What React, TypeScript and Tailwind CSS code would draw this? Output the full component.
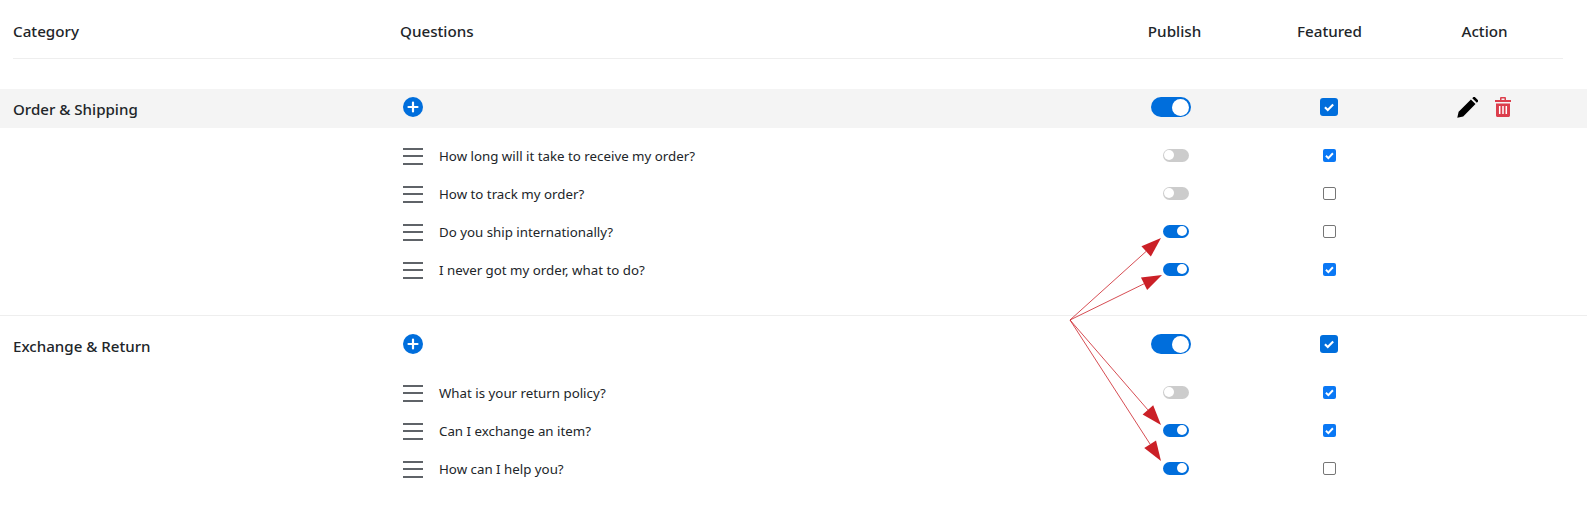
const blue = "#006edc";

function Toggle({ on, big }: { on: boolean; big?: boolean }) {
  if (big) {
    return (
      <div className="mr-[8px] flex h-[20px] w-[40px] items-center justify-end rounded-full bg-[#006edc] pr-[2px]">
        <div className="h-[17px] w-[17px] rounded-full bg-white" />
      </div>
    );
  }
  return (
    <div
      className={
        on
          ? "ml-[2px] flex h-[13px] w-[26px] items-center justify-end rounded-full bg-[#006edc] pr-[1.5px]"
          : "ml-[2px] flex h-[13px] w-[26px] items-center justify-start rounded-full bg-[#cccccc] pl-[1.5px]"
      }
    >
      <div className="h-[10px] w-[10px] rounded-full bg-white" />
    </div>
  );
}

function Check({ big }: { big?: boolean }) {
  return (
    <svg viewBox="0 0 16 16" className="h-full w-full">
      <path d={big ? "M4.4 8.2l2.5 2.4 4.8-4.9" : "M3.6 8.3l3 2.9 5.6-6"} fill="none" stroke="#fff" strokeWidth={big ? 1.9 : 2.4} />
    </svg>
  );
}

function Checkbox({ on, big }: { on: boolean; big?: boolean }) {
  if (big) {
    return (
      <div className="mr-[2px] h-[18px] w-[18px] rounded-[3px] bg-[#006edc]">
        <Check big />
      </div>
    );
  }
  return on ? (
    <div className="h-[13px] w-[13px] rounded-[2px] bg-[#0a78f5]">
      <Check />
    </div>
  ) : (
    <div className="h-[13px] w-[13px] rounded-[2px] border border-[#767676] bg-white" />
  );
}

function Plus() {
  return (
    <svg viewBox="0 0 20 20" className="h-[20px] w-[20px]">
      <circle cx="10" cy="10" r="10" fill={blue} />
      <path d="M10 5.500v9M5.500 10h9" stroke="#fff" strokeWidth="2.200" strokeLinecap="round" />
    </svg>
  );
}

function Drag() {
  return (
    <div className="mt-[2px] flex h-[17px] w-[20px] flex-col justify-between">
      <div className="h-[2px] w-full bg-[#5f6368]" />
      <div className="h-[2px] w-full bg-[#5f6368]" />
      <div className="h-[2px] w-full bg-[#5f6368]" />
    </div>
  );
}

const gridClass = "grid grid-cols-[387px_1fr_155px_155px_156px] items-center";

function Question({ text, pub, feat }: { text: string; pub: boolean; feat: boolean }) {
  return (
    <div className={`${gridClass} h-[38px]`}>
      <div />
      <div className="flex items-center pl-[3px]">
        <Drag />
        <span className="ml-[16px] pt-[4px] text-[13.3px] text-[#212529]">{text}</span>
      </div>
      <div className="flex justify-center">
        <Toggle on={pub} />
      </div>
      <div className="flex justify-center">
        <Checkbox on={feat} />
      </div>
      <div />
    </div>
  );
}

function CategoryRow({ name, actions, band }: { name: string; actions?: boolean; band?: boolean }) {
  return (
    <div className={band ? "-ml-[13px] -mr-[24px] bg-[#f4f4f4] pl-[13px] pr-[24px]" : ""}>
      <div className={`${gridClass} h-[39px]`}>
        <div className="pt-[1px] text-[15.1px] font-medium text-[#212529]">{name}</div>
        <div className="pl-[3px] pb-[3px]">
          <Plus />
        </div>
        <div className="flex justify-center pb-[3px]">
          <Toggle on big />
        </div>
        <div className="flex justify-center pb-[3px]">
          <Checkbox on big />
        </div>
        <div className="flex items-center justify-center gap-[17px] pb-[3px] pr-[2px]">
          {actions && (
            <>
              <svg viewBox="0 0 22 22" className="h-[21px] w-[21px]">
                <path d="M0.300 21.700l1.400-6.200L14.600 2.600l4.800 4.800L6.500 20.300zM16 1.200l1-1c.6-.5 1.400-.5 1.900 0l2.900 2.900c.5.5.5 1.300 0 1.900l-1 1z" fill="#000" />
              </svg>
              <svg viewBox="0 0 16 20" className="h-[20px] w-[16px]">
                <path d="M5 3V1.200C5 .5 5.500 0 6.200 0h3.600C10.500 0 11 .5 11 1.200V3h5v2H0V3zM6.500 3h3V1.500h-3zM1 6.500h14V18.500c0 .8-.7 1.500-1.500 1.500h-11C1.700 20 1 19.300 1 18.500z" fill="#dc3e4c" fillRule="evenodd" />
                <path d="M4.700 9v8M8 9v8M11.300 9v8" stroke="#fff" strokeWidth="1.500" />
              </svg>
            </>
          )}
        </div>
      </div>
    </div>
  );
}

function Arrows() {
  const origin = [1070, 320];
  const tips = [
    [1161, 238],
    [1162, 275],
    [1161, 425],
    [1161, 461],
  ];
  return (
    <svg className="pointer-events-none absolute left-0 top-0 h-[513px] w-[1587px]" viewBox="0 0 1587 513">
      {tips.map(([x, y], i) => {
        const dx = x - origin[0];
        const dy = y - origin[1];
        const len = Math.hypot(dx, dy);
        const ux = dx / len;
        const uy = dy / len;
        const bx = x - ux * 20;
        const by = y - uy * 20;
        const px = -uy * 7;
        const py = ux * 7;
        return (
          <g key={i}>
            <line x1={origin[0]} y1={origin[1]} x2={bx} y2={by} stroke="#cb2027" strokeWidth="0.8" />
            <polygon points={`${x},${y} ${bx + px},${by + py} ${bx - px},${by - py}`} fill="#cb2027" />
          </g>
        );
      })}
    </svg>
  );
}

export default function App() {
  return (
    <div className="relative h-[513px] w-[1587px] overflow-hidden bg-white font-['Noto_Sans',sans-serif]">
      <div className="w-[1550px] pl-[13px] box-content">
        <div className={`${gridClass} h-[59px] border-b border-[#eeeeee] pt-[5px] text-[15.2px] font-medium text-[#212529]`}>
          <div>Category</div>
          <div>Questions</div>
          <div className="text-center">Publish</div>
          <div className="text-center">Featured</div>
          <div className="text-center pr-[1px]">Action</div>
        </div>
        <div className="h-[30px]" />
        <CategoryRow name="Order & Shipping" actions band />
        <div className="pt-[8px]">
          <Question text="How long will it take to receive my order?" pub={false} feat />
          <Question text="How to track my order?" pub={false} feat={false} />
          <Question text="Do you ship internationally?" pub feat={false} />
          <Question text="I never got my order, what to do?" pub feat />
        </div>
        <div className="-ml-[13px] mt-[27px] h-px w-[1587px] bg-[#eeeeee]" />
        <div className="pt-[10px]">
          <CategoryRow name="Exchange & Return" />
        </div>
        <div className="pt-[8px]">
          <Question text="What is your return policy?" pub={false} feat />
          <Question text="Can I exchange an item?" pub feat />
          <Question text="How can I help you?" pub feat={false} />
        </div>
      </div>
      <Arrows />
    </div>
  );
}
